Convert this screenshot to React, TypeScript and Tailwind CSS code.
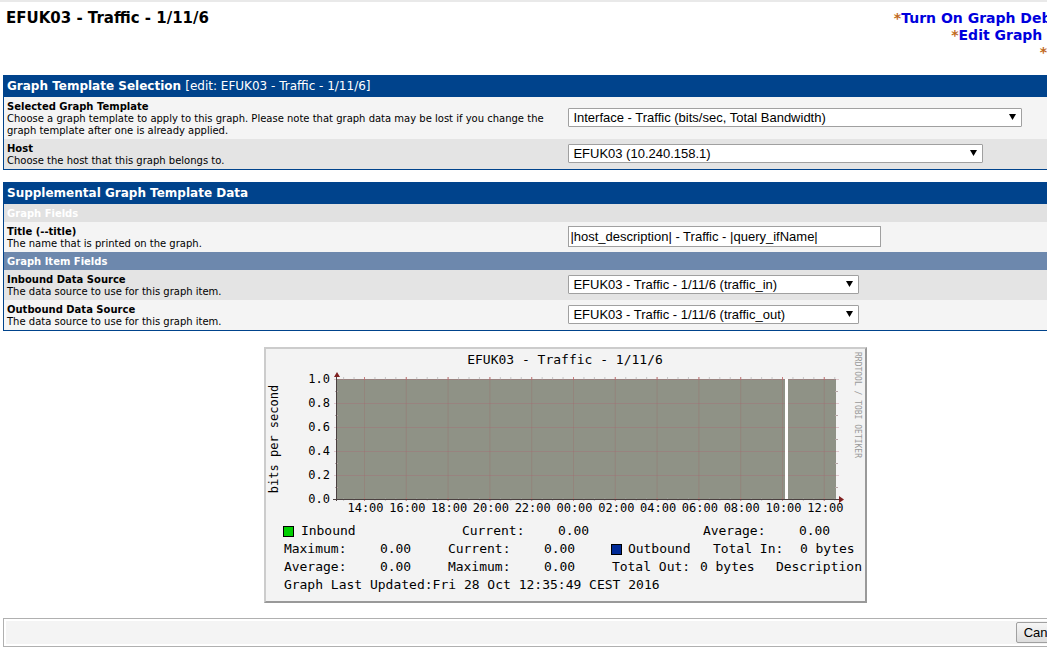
import { useState, type ReactNode } from "react";

const hours = ["14:00", "16:00", "18:00", "20:00", "22:00", "00:00", "02:00", "04:00", "06:00", "08:00", "10:00", "12:00"];
const levels = ["1.0", "0.8", "0.6", "0.4", "0.2", "0.0"];

// Plot area inside the graph
const LEFT = 71;
const RIGHT = 570;
const TOP = 30;
const BOTTOM = 150;

const hourX = (i: number) => 98.5 + i * 41.8;

function SelectBox({ id, className, options }: { id: string; className: string; options: string[] }) {
  const [value, setValue] = useState(options[0]);

  return (
    <div className={`relative ${className}`}>
      <select
        id={id}
        value={value}
        onChange={(e) => setValue(e.target.value)}
        className="block w-full h-[19px] appearance-none rounded-[1px] border border-[#a0a0a0] bg-white pl-1 pr-5 font-['Liberation_Sans',sans-serif] text-[13px] leading-[17px] text-black"
      >
        {options.map((o) => (
          <option key={o}>{o}</option>
        ))}
      </select>
      <svg className="pointer-events-none absolute right-1.5 top-1.5" width="7" height="6" viewBox="0 0 7 6">
        <path d="M0 0H7L3.5 6Z" />
      </svg>
    </div>
  );
}

function Panel({ title, note, children }: { title: string; note?: string; children: ReactNode }) {
  return (
    <section className="border border-t-0 border-[#00438c]">
      <h2 className="bg-[#00438c] px-[3px] pt-px text-[12px] leading-[21px] font-bold text-white">
        {title} {note && <span className="font-normal">{note}</span>}
      </h2>
      {children}
    </section>
  );
}

function Field({ id, label, help, shaded, children }: { id: string; label: string; help: string; shaded?: boolean; children: ReactNode }) {
  return (
    <div className={`flex items-center ${shaded ? "bg-[#e4e4e4]" : "bg-[#f4f4f4]"}`}>
      <div className="w-1/2 px-[3px] pt-1 pb-0.5 text-[10px] leading-[12px]">
        <label htmlFor={id} className="block font-bold">{label}</label>
        <p>{help}</p>
      </div>
      <div className="w-1/2 px-[3px] pb-0.5">{children}</div>
    </div>
  );
}

function TrafficChart() {
  return (
    <svg width="599" height="173" viewBox="0 0 599 173" className="block font-['DejaVu_Sans_Mono',monospace]">
      <text x="299" y="15" fontSize="13" textAnchor="middle">EFUK03 - Traffic - 1/11/6</text>
      <text transform="translate(12 90) rotate(-90)" fontSize="12" textAnchor="middle">bits per second</text>
      <text transform="translate(589 3) rotate(90)" fontSize="8" fill="#999">RRDTOOL / TOBI OETIKER</text>

      <rect x={LEFT} y={TOP} width={RIGHT - LEFT} height={BOTTOM - TOP} fill="#8f9286" />

      {/* Minor ticks */}
      {Array.from({ length: 48 }, (_, i) => 77.6 + i * 10.45).filter((x) => x < RIGHT).map((x) => (
        <path key={x} d={`M${x} 28V31M${x} 149V152`} stroke="#a9a9a9" strokeOpacity="0.6" />
      ))}
      {levels.slice(1).map((l, i) => (
        <path key={l} d={`M69 ${42.5 + i * 24}H72M569 ${42.5 + i * 24}H572`} stroke="#b5a5a5" />
      ))}

      {/* Major grid */}
      {hours.map((h, i) => (
        <g key={h}>
          <path d={`M${hourX(i)} 28V152`} stroke="#a06060" strokeOpacity="0.25" />
          <path d={`M${hourX(i)} 28V31M${hourX(i)} 149V152`} stroke="#d06060" strokeOpacity="0.6" />
          <text x={hourX(i) + 1} y="163" fontSize="12" textAnchor="middle">{h}</text>
        </g>
      ))}
      {levels.map((l, i) => (
        <g key={l}>
          <path d={`M68 ${30.5 + i * 24}H573`} stroke="#b06070" strokeOpacity="0.3" />
          <text x="64" y={34 + i * 24} fontSize="12" textAnchor="end">{l}</text>
        </g>
      ))}

      <rect x="519" y={TOP} width="3" height={BOTTOM - TOP} fill="#fff" />
      <path d={`M${LEFT - 0.5} 152V27M67 ${BOTTOM + 0.5}H574`} stroke="#4a4040" fill="none" />
      <path d="M68 28L71 23L74 28ZM573 147L578 150.5L573 154Z" fill="#802020" />
    </svg>
  );
}

function Legend() {
  return (
    <div className="pl-[18px] pb-[7px] font-['DejaVu_Sans_Mono',monospace] text-[13px] leading-[18px] whitespace-nowrap">
      <div className="flex items-center">
        <span className="-ml-px mr-[7px] size-[11px] border border-black bg-[#00cf00]" />
        <span className="w-[161px]">Inbound</span>
        <span className="w-[96px]">Current:</span>
        <span className="w-[145px]">0.00</span>
        <span className="w-[96px]">Average:</span>
        <span>0.00</span>
      </div>
      <div className="flex items-center">
        <span className="w-[96px]">Maximum:</span>
        <span className="w-[68px]">0.00</span>
        <span className="w-[96px]">Current:</span>
        <span className="w-[67px]">0.00</span>
        <span className="mr-[6px] size-[11px] border border-black bg-[#002a97]" />
        <span className="w-[85px]">Outbound</span>
        <span className="w-[87px]">Total In:</span>
        <span>0 bytes</span>
      </div>
      <div className="flex items-center">
        <span className="w-[96px]">Average:</span>
        <span className="w-[68px]">0.00</span>
        <span className="w-[96px]">Maximum:</span>
        <span className="w-[68px]">0.00</span>
        <span className="w-[88px]">Total Out:</span>
        <span className="w-[76px]">0 bytes</span>
        <span>Description</span>
      </div>
      <div>Graph Last Updated:Fri 28 Oct 12:35:49 CEST 2016</div>
    </div>
  );
}

const links = ["Turn On Graph Debug Mode.", "Edit Graph Template.", "Edit Host."];

export default function App() {
  const [title, setTitle] = useState("|host_description| - Traffic - |query_ifName|");

  return (
    <div className="min-h-screen overflow-x-hidden bg-white font-['DejaVu_Sans',Verdana,sans-serif] text-black">
      {/* The console is a little wider than the window */}
      <div className="w-[108%] border-t-2 border-[#e9e9e9] px-[3px]">
        <header className="flex justify-between px-[3px] pt-2 pb-[14px] text-[14px] leading-[17px] font-bold">
          <h1 className="text-[15px]">EFUK03 - Traffic - 1/11/6</h1>
          <nav className="text-right">
            {links.map((l) => (
              <div key={l} className="text-[#c16921]">
                *<a href="#" className="text-[#0000dd]">{l}</a>
              </div>
            ))}
          </nav>
        </header>

        <form onSubmit={(e) => e.preventDefault()}>
          <Panel title="Graph Template Selection" note="[edit: EFUK03 - Traffic - 1/11/6]">
            <Field
              id="graph_template"
              label="Selected Graph Template"
              help="Choose a graph template to apply to this graph. Please note that graph data may be lost if you change the graph template after one is already applied."
            >
              <SelectBox id="graph_template" className="w-[454px]" options={["Interface - Traffic (bits/sec, Total Bandwidth)"]} />
            </Field>
            <Field id="host" label="Host" help="Choose the host that this graph belongs to." shaded>
              <SelectBox id="host" className="w-[415px]" options={["EFUK03 (10.240.158.1)"]} />
            </Field>
          </Panel>

          <div className="mt-3">
            <Panel title="Supplemental Graph Template Data">
              <h3 className="bg-[#e1e1e1] px-[3px] pt-px text-[10px] leading-[17px] font-bold text-white">Graph Fields</h3>
              <Field id="title" label="Title (--title)" help="The name that is printed on the graph.">
                <input
                  id="title"
                  type="text"
                  value={title}
                  onChange={(e) => setTitle(e.target.value)}
                  className="block w-[313px] h-[21px] border border-[#a0a0a0] bg-white px-px font-['Liberation_Sans',sans-serif] text-[13px]"
                />
              </Field>
              <h3 className="bg-[#6d88ad] px-[3px] pt-px text-[10px] leading-[17px] font-bold text-white">Graph Item Fields</h3>
              <Field id="inbound" label="Inbound Data Source" help="The data source to use for this graph item." shaded>
                <SelectBox id="inbound" className="w-[291px]" options={["EFUK03 - Traffic - 1/11/6 (traffic_in)"]} />
              </Field>
              <Field id="outbound" label="Outbound Data Source" help="The data source to use for this graph item.">
                <SelectBox id="outbound" className="w-[291px]" options={["EFUK03 - Traffic - 1/11/6 (traffic_out)"]} />
              </Field>
            </Panel>
          </div>

          <div className="mx-auto mt-4 w-fit border-2 border-t-[#cccccc] border-l-[#cccccc] border-r-[#999999] border-b-[#999999] bg-[#f3f3f3]">
            <TrafficChart />
            <Legend />
          </div>

          <div className="mt-[15px] border border-[#b0b0b0] p-[2px]">
            <div className="flex justify-end gap-1 bg-[#f4f4f4] px-[3px] py-px font-['Liberation_Sans',sans-serif] text-[13px]">
              <button type="button" className="h-[21px] rounded-[2px] border border-[#a0a0a0] bg-linear-to-b from-[#f6f6f6] to-[#dddddd] px-[7px] leading-[19px]">Cancel</button>
              <button type="submit" className="h-[21px] rounded-[2px] border border-[#a0a0a0] bg-linear-to-b from-[#f6f6f6] to-[#dddddd] px-[7px] leading-[19px]">Save</button>
            </div>
          </div>
        </form>
      </div>
    </div>
  );
}
